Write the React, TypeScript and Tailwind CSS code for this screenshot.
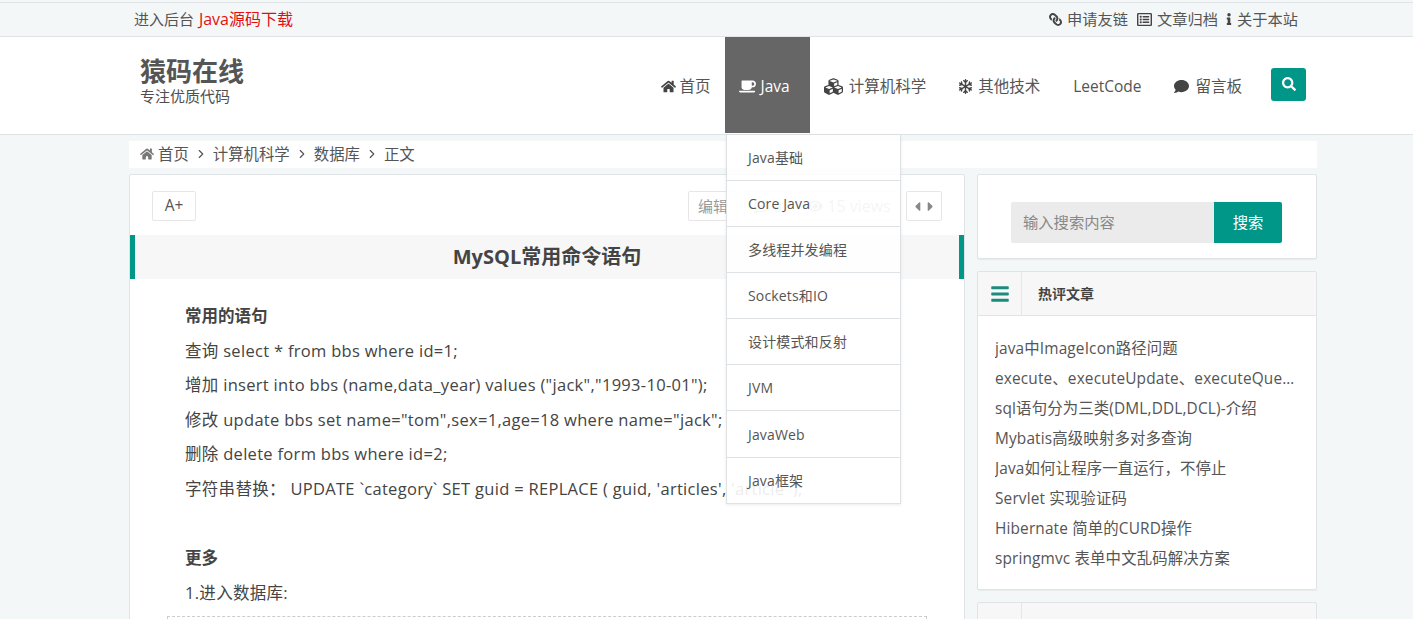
import { FaHome, FaCoffee, FaCubes, FaRegSnowflake, FaComment, FaSearch, FaLink, FaRegListAlt, FaInfo, FaBars, FaEye, FaRegCommentDots, FaCaretLeft, FaCaretRight } from 'react-icons/fa';
import { ChevronRight } from 'lucide-react';

const subMenu = ['Java基础', 'Core Java', '多线程并发编程', 'Sockets和IO', '设计模式和反射', 'JVM', 'JavaWeb', 'Java框架'];

const hotPosts = [
  'java中ImageIcon路径问题',
  'execute、executeUpdate、executeQuery三者的区别',
  'sql语句分为三类(DML,DDL,DCL)-介绍',
  'Mybatis高级映射多对多查询',
  'Java如何让程序一直运行，不停止',
  'Servlet 实现验证码',
  'Hibernate 简单的CURD操作',
  'springmvc 表单中文乱码解决方案',
];

const crumbs = ['计算机科学', '数据库', '正文'];

const App = () => {
  return (
    <div className="h-[619px] overflow-hidden bg-[#f4f7f8] pt-[2px] font-['Open_Sans','Noto_Sans_CJK_SC',sans-serif] text-[15px] text-[#555]">
      {/* Top bar */}
      <div className="h-[35px] border-y border-[#e1e4e6]">
        <div className="flex h-[33px] items-center justify-between pr-[115px] pb-[1px] pl-[134px]">
          <div>
            进入后台 <span className="ml-[1px] text-[16px] text-[#e30f0f]">Java源码下载</span>
          </div>
          <div className="flex items-center gap-[9px] text-[15.25px]">
            <span className="flex items-center gap-[5px]"><FaLink className="-scale-x-100 text-[13px] text-[#444]" />申请友链</span>
            <span className="flex items-center gap-[5px]"><FaRegListAlt className="text-[15px] text-[#444]" />文章归档</span>
            <span className="-ml-[4px] flex items-center gap-[2px]"><FaInfo className="text-[12px] text-[#444]" />关于本站</span>
          </div>
        </div>
      </div>

      {/* Header */}
      <header className="h-[98px] border-b border-[#dfe2e4] bg-white">
        <div className="relative ml-[130px] flex h-[96px] w-[1187px] items-center justify-between pr-[11px] pl-[10px]">
          <div className="-mt-[10px]">
            <div className="text-[26px] leading-[30px] font-bold text-[#555]">猿码在线</div>
            <div className="mt-[2px] text-[15px] leading-[16px] text-[#4f4f4f]">专注优质代码</div>
          </div>
          <nav className="flex h-[96px] items-center text-[15.5px] text-[#555]">
            <a className="mt-[3px] flex items-center gap-[4px] pr-[14px]"><FaHome className="text-[15px] text-[#444]" />首页</a>
            <a className="flex h-[96px] items-center gap-[5px] bg-[#666] pt-[3px] pr-[20px] pl-[14px] text-white"><FaCoffee className="text-[17px]" />Java</a>
            <a className="mt-[3px] flex items-center gap-[6px] px-[14px]"><FaCubes className="text-[19px] text-[#444]" />计算机科学</a>
            <a className="mt-[3px] flex items-center gap-[5px] px-[18px]"><FaRegSnowflake className="text-[15px] text-[#444]" />其他技术</a>
            <a className="mt-[3px] px-[15px]">LeetCode</a>
            <a className="mt-[3px] flex items-center gap-[6px] px-[18px]"><FaComment className="text-[15px] text-[#444]" />留言板</a>
            <button className="-mt-[2px] ml-[11px] flex h-[33px] w-[35px] items-center justify-center rounded-[3px] bg-[#009688] text-white"><FaSearch className="text-[14px]" /></button>
          </nav>

          {/* Java dropdown, open over the article */}
          <ul className="absolute top-[98px] left-[596px] z-10 w-[175px] border-x border-b border-[#dfe2e4] bg-white/90 text-[14px] tracking-[0.15px] shadow-[0_1px_3px_rgba(0,0,0,0.08)]">
            {subMenu.map((item, i) => (
              <li
                key={item}
                className={`flex items-center pl-[21px] ${i > 0 ? 'border-t border-[#dfe2e4]' : ''} ${i === 0 ? 'h-[45px]' : i === 6 ? 'h-[47px]' : 'h-[46px]'}`}
              >
                {item}
              </li>
            ))}
          </ul>
        </div>
      </header>

      <div className="ml-[129px] w-[1188px] pt-[6px]">
        {/* Breadcrumb */}
        <div className="flex h-[27px] items-center gap-[5px] bg-white pl-[11px] text-[15.4px]">
          <span className="flex items-center gap-[4px]"><FaHome className="text-[14px] text-[#777]" />首页</span>
          {crumbs.map(c => (
            <span key={c} className="flex items-center gap-[5px]"><ChevronRight size={14} className="text-[#555]" />{c}</span>
          ))}
        </div>

        <div className="mt-[6px] flex items-start gap-[12px]">
          {/* Article */}
          <main className="h-[500px] w-[836px] shrink-0 rounded-t-[2px] border border-[#e1e4e6] bg-white">
            <div className="flex items-center justify-between pt-[15px] pr-[22px] pl-[22px]">
              <button className="h-[30px] w-[44px] rounded-[2px] border border-[#e6e6e6] pt-[1px] text-[15.5px]">A+</button>
              <div className="flex gap-[6px] pt-[1px] text-[15px] text-[#999]">
                <span className="flex h-[30px] w-[50px] items-center justify-center rounded-[2px] border border-[#e6e6e6]">编辑</span>
                <span className="flex h-[30px] w-[48px] items-center justify-center gap-[4px] rounded-[2px] border border-[#e6e6e6]"><FaRegCommentDots />0</span>
                <span className="flex h-[30px] w-[102px] items-center justify-center gap-[4px] rounded-[2px] border border-[#e6e6e6] text-[16px]"><FaEye />15 views</span>
                <span className="flex h-[30px] w-[36px] items-center justify-center rounded-[2px] border border-[#e6e6e6] text-[#888]"><FaCaretLeft className="-mr-[1px]" /><FaCaretRight className="-ml-[1px]" /></span>
              </div>
            </div>
            <h1 className="mt-[14px] flex h-[44px] items-center justify-center border-x-[5px] border-[#009688] bg-[#f7f7f7] text-[20px] font-bold text-[#444]">MySQL常用命令语句</h1>
            <article className="pt-[20px] pl-[55px] text-[16.5px] leading-[34.5px] tracking-[0.3px] text-[#444]">
              <p className="font-bold tracking-normal">常用的语句</p>
              <p>查询 select * from bbs where id=1;</p>
              <p>增加 insert into bbs (name,data_year) values ("jack","1993-10-01");</p>
              <p>修改 update bbs set name="tom",sex=1,age=18 where name="jack";</p>
              <p>删除 delete form bbs where id=2;</p>
              <p>字符串替换： UPDATE `category` SET guid = REPLACE ( guid, 'articles', 'article' );</p>
              <p className="mt-[35px] font-bold tracking-normal">更多</p>
              <p>1.进入数据库:</p>
            </article>
            <div className="mt-[6px] ml-[37px] h-[20px] w-[760px] border border-dashed border-[#ccc]" />
          </main>

          {/* Sidebar */}
          <aside className="flex w-[340px] shrink-0 flex-col gap-[12px]">
            <div className="flex h-[85px] justify-center rounded-[2px] border border-[#e1e4e6] bg-white pt-[27px] pr-[1px] shadow-[0_1px_1px_rgba(0,0,0,0.05)]">
              <div className="flex h-[41px] text-[15.3px]">
                <div className="flex w-[203px] items-center rounded-l-[2px] bg-[#ebebeb] pl-[12px] text-[#888]">输入搜索内容</div>
                <div className="flex w-[68px] items-center justify-center rounded-r-[2px] bg-[#009688] text-white">搜索</div>
              </div>
            </div>

            <div className="h-[319px] rounded-[2px] border border-[#e1e4e6] bg-white shadow-[0_1px_1px_rgba(0,0,0,0.05)]">
              <div className="flex h-[44px] border-b border-[#e1e4e6] bg-[#f7f7f7]">
                <div className="flex w-[44px] items-center justify-center border-r border-[#e6e6e6] text-[20px] text-[#1c8a7c]"><FaBars /></div>
                <div className="flex items-center pl-[16px] text-[14px] font-bold text-[#444]">热评文章</div>
              </div>
              <ul className="px-[17px] pt-[18px]">
                {hotPosts.map(p => (
                  <li key={p} className="truncate text-[15.4px] leading-[30px] tracking-[0.15px]">{p}</li>
                ))}
              </ul>
            </div>

            <div className="flex h-[44px] rounded-t-[2px] border border-[#e1e4e6] bg-[#f7f7f7]">
              <div className="w-[44px] border-r border-[#e6e6e6]" />
            </div>
          </aside>
        </div>
      </div>
    </div>
  );
};

export default App;
